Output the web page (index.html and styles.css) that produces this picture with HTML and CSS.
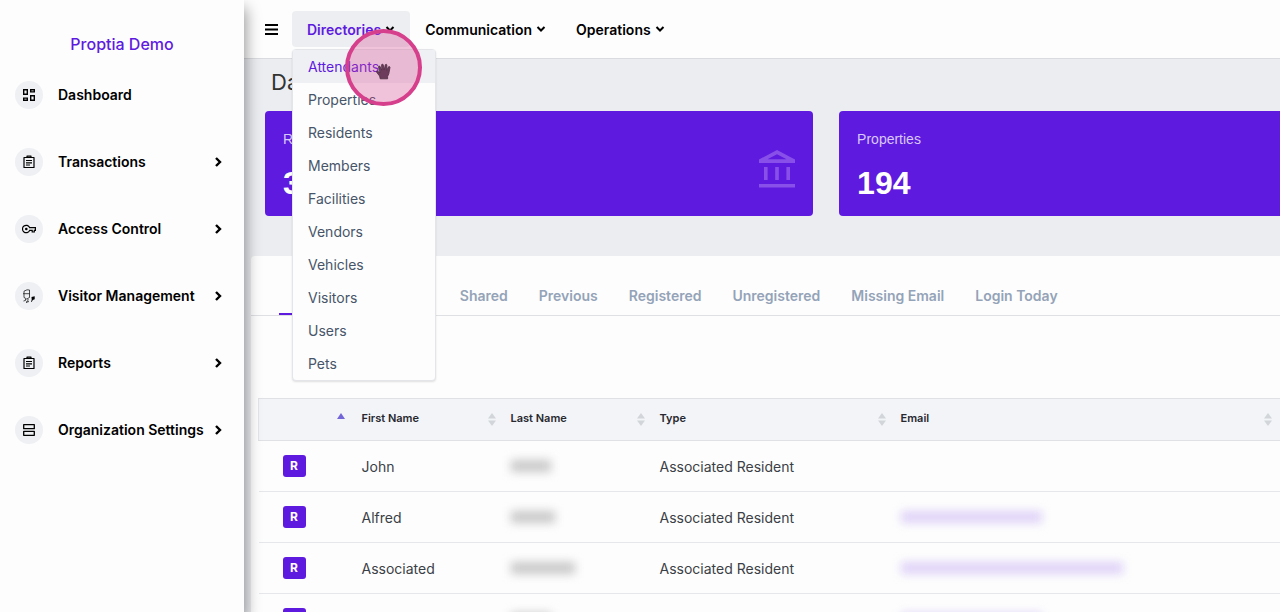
FILE: index.html
```html
<!DOCTYPE html>
<html lang="en">
<head>
    <meta charset="UTF-8">
    <meta name="viewport" content="width=device-width, initial-scale=1">
    <title>Proptia Demo</title>
    <link rel="stylesheet" href="styles.css">
</head>
<body>
<svg class="sprite" aria-hidden="true">
    <symbol id="chevron" viewBox="0 0 10 10">
        <path d="M1.5 3L5 6.5L8.5 3" fill="none" stroke="currentColor" stroke-width="2"/>
    </symbol>
    <symbol id="arrow" viewBox="0 0 10 10">
        <path d="M3 1L7 5L3 9" fill="none" stroke="currentColor" stroke-width="2.4"/>
    </symbol>
    <symbol id="clipboard" viewBox="0 0 14 14">
        <path d="M2 2.5h10v10H2zM5 2.5V1.2h4v1.3M4 5.5h6M4 7.8h6M4 10h4" fill="none" stroke="currentColor" stroke-width="1.2" stroke-linejoin="round"/>
    </symbol>
    <symbol id="sort" viewBox="0 0 8 13">
        <path d="M4 0L8 5.5H0zM4 13L0 7.5H8z" fill="currentColor"/>
    </symbol>
</svg>

<aside class="sidebar">
    <h2 class="brand">Proptia Demo</h2>
    <nav class="side-nav">
        <a href="#" class="side-link">
            <span class="side-icon"><svg viewBox="0 0 14 14"><path d="M1.7 1.7h3.6v4.6H1.7zM8.7 1.7h3.6v2.2H8.7zM1.7 10.1h3.6v2.2H1.7zM8.7 7.7h3.6v4.6H8.7z" fill="none" stroke="currentColor" stroke-width="1.4"/></svg></span>
            <span>Dashboard</span>
        </a>
        <a href="#" class="side-link">
            <span class="side-icon"><svg><use href="#clipboard"/></svg></span>
            <span>Transactions</span>
            <svg class="arrow"><use href="#arrow"/></svg>
        </a>
        <a href="#" class="side-link">
            <span class="side-icon"><svg viewBox="0 0 14 14"><path d="M7.6 5.6H13.4V8.4H12.3V10H10.2V8.4H7.6A3.7 3.7 0 1 1 7.6 5.6z" fill="none" stroke="currentColor" stroke-width="1.2"/><circle cx="4.3" cy="7" r="1.3"/></svg></span>
            <span>Access Control</span>
            <svg class="arrow"><use href="#arrow"/></svg>
        </a>
        <a href="#" class="side-link">
            <span class="side-icon"><svg viewBox="0 0 14 14"><path d="M2 4.5V2.2L5 .8L7.5 1V4.5M1 4.7H8M2 4.7V8.5Q4.7 11.5 7.5 8.5V4.7M3.5 10v1.4L1.5 12M6 10v1.6L4 13.4L7 12.5" fill="none" stroke="currentColor" stroke-width=".7"/><path d="M9.5 8l3.2-.8V10.2L10.8 11L9.7 13L9 12.6L9.7 11z"/></svg></span>
            <span>Visitor Management</span>
            <svg class="arrow"><use href="#arrow"/></svg>
        </a>
        <a href="#" class="side-link">
            <span class="side-icon"><svg><use href="#clipboard"/></svg></span>
            <span>Reports</span>
            <svg class="arrow"><use href="#arrow"/></svg>
        </a>
        <a href="#" class="side-link">
            <span class="side-icon"><svg viewBox="0 0 14 14"><path d="M1.7 1.7h10.6v4H1.7zM1.7 8.3h10.6v4H1.7z" fill="none" stroke="currentColor" stroke-width="1.3" stroke-linejoin="round"/></svg></span>
            <span>Organization Settings</span>
            <svg class="arrow"><use href="#arrow"/></svg>
        </a>
    </nav>
</aside>

<div class="main">
    <header class="topbar">
        <button class="burger" type="button" aria-label="Toggle menu"><svg viewBox="0 0 13 11"><path d="M0 1h13M0 5.5h13M0 10h13" stroke="currentColor" stroke-width="2"/></svg></button>
        <div class="dropdown">
            <button class="top-link active" type="button" aria-expanded="true">Directories<svg class="chevron"><use href="#chevron"/></svg></button>
            <ul class="menu">
                <li><a href="#" class="current">Attendants</a></li>
                <li><a href="#">Properties</a></li>
                <li><a href="#">Residents</a></li>
                <li><a href="#">Members</a></li>
                <li><a href="#">Facilities</a></li>
                <li><a href="#">Vendors</a></li>
                <li><a href="#">Vehicles</a></li>
                <li><a href="#">Visitors</a></li>
                <li><a href="#">Users</a></li>
                <li><a href="#">Pets</a></li>
            </ul>
            <div class="pointer">
                <svg viewBox="0 0 16 17"><path d="M4.2 15.8L3.6 13L.6 9.2Q.2 8 1.4 8L4 9.8L2.5 4Q2.6 2.6 3.9 3.2L5.8 7.2L5.6 1.8Q6.3.4 7.2 1.6L8.2 7L9.3 1.7Q10.2.5 10.9 1.9L10.7 7.4L12.5 3.8Q13.8 3.1 14 4.4L12.8 10.8L11.6 13.5V15.8z" fill="#6d3c5c" stroke="#4d2f43" stroke-width=".8"/></svg>
            </div>
        </div>
        <button class="top-link" type="button">Communication<svg class="chevron"><use href="#chevron"/></svg></button>
        <button class="top-link" type="button">Operations<svg class="chevron"><use href="#chevron"/></svg></button>
    </header>

    <h1 class="title">Dashboard</h1>

    <section class="cards">
        <div class="card">
            <div>
                <p class="card-label">Residents</p>
                <p class="card-value">356</p>
            </div>
            <svg class="bank" viewBox="0 0 36 38"><path fill-rule="evenodd" d="M0 9.5L18 0L36 9.5V13H0zM8.5 9.3H27.5L18 4.2zM5 17h3.6v13H5zM16.2 17h3.6v13h-3.6zM27.4 17H31v13h-3.6zM0 34h36v3.6H0z" fill="currentColor"/></svg>
        </div>
        <div class="card">
            <div>
                <p class="card-label">Properties</p>
                <p class="card-value">194</p>
            </div>
        </div>
    </section>

    <section class="panel">
        <nav class="tabs">
            <a href="#" class="selected">Active</a>
            <a href="#">Archived</a>
            <a href="#">Shared</a>
            <a href="#">Previous</a>
            <a href="#">Registered</a>
            <a href="#">Unregistered</a>
            <a href="#">Missing Email</a>
            <a href="#">Login Today</a>
        </nav>
        <table class="people">
            <colgroup>
                <col class="col-badge">
                <col class="col-name">
                <col class="col-name">
                <col class="col-type">
                <col class="col-email">
                <col>
            </colgroup>
            <thead>
            <tr>
                <th><svg class="sorted" viewBox="0 0 8 6"><path d="M4 0L8 6H0z" fill="currentColor"/></svg></th>
                <th>First Name<svg class="sort"><use href="#sort"/></svg></th>
                <th>Last Name<svg class="sort"><use href="#sort"/></svg></th>
                <th>Type<svg class="sort"><use href="#sort"/></svg></th>
                <th>Email<svg class="sort"><use href="#sort"/></svg></th>
                <th></th>
            </tr>
            </thead>
            <tbody>
            <tr>
                <td><span class="badge">R</span></td>
                <td>John</td>
                <td><span class="masked" style="width: 40px"></span></td>
                <td>Associated Resident</td>
                <td></td>
                <td></td>
            </tr>
            <tr>
                <td><span class="badge">R</span></td>
                <td>Alfred</td>
                <td><span class="masked" style="width: 44px"></span></td>
                <td>Associated Resident</td>
                <td><span class="masked mail" style="width: 141px"></span></td>
                <td></td>
            </tr>
            <tr>
                <td><span class="badge">R</span></td>
                <td>Associated</td>
                <td><span class="masked" style="width: 64px"></span></td>
                <td>Associated Resident</td>
                <td><span class="masked mail" style="width: 222px"></span></td>
                <td></td>
            </tr>
            <tr>
                <td><span class="badge">R</span></td>
                <td></td>
                <td><span class="masked" style="width: 40px"></span></td>
                <td></td>
                <td><span class="masked mail" style="width: 141px"></span></td>
                <td></td>
            </tr>
            </tbody>
        </table>
    </section>
</div>
</body>
</html>
```

FILE: styles.css
```css
*{
    margin: 0;
    padding: 0;
    box-sizing: border-box;
}
body{
    display: flex;
    height: 100vh;
    overflow: hidden;
    background-color: #ebedf1;
    font-family: Inter, "Liberation Sans", sans-serif;
    font-size: 14px;
    color: #000;
}
a{
    color: inherit;
    text-decoration: none;
}
button{
    border: none;
    background: none;
    font: inherit;
    color: inherit;
    cursor: pointer;
}
.sprite{
    position: absolute;
    width: 0;
    height: 0;
}

/* sidebar */
.sidebar{
    flex: none;
    width: 244px;
    padding-top: 34px;
    background-color: #fdfdfd;
    box-shadow: 2px 8px 14px rgba(0, 0, 0, .4);
    z-index: 1;
}
.brand{
    font-size: 16px;
    font-weight: 500;
    line-height: 20px;
    text-align: center;
    color: #5f1ae0;
}
.side-nav{
    padding: 7px 21px 0 15px;
}
.side-link{
    display: flex;
    align-items: center;
    height: 67px;
    font-weight: 600;
    white-space: nowrap;
}
.side-icon{
    display: flex;
    align-items: center;
    justify-content: center;
    flex: none;
    width: 28px;
    height: 28px;
    margin-right: 15px;
    border-radius: 50%;
    background-color: #eef0f3;
}
.side-icon svg{
    width: 14px;
    height: 14px;
}
.arrow{
    width: 10px;
    height: 10px;
    margin-left: auto;
}

/* top bar */
.main{
    flex: 1;
    display: flex;
    flex-direction: column;
    min-width: 0;
    overflow: hidden;
}
.topbar{
    display: flex;
    flex: none;
    align-items: center;
    height: 59px;
    padding-left: 21px;
    background-color: #fdfdfd;
    border-bottom: 1px solid #d9dbe0;
}
.burger{
    width: 13px;
    height: 11px;
    margin-right: 14px;
}
.burger svg{
    display: block;
}
.dropdown{
    position: relative;
}
.top-link{
    display: flex;
    align-items: center;
    height: 36px;
    padding: 0 15px;
    border-radius: 4px;
    font-weight: 600;
}
.active{
    background-color: #eceef1;
    color: #5f1ae0;
}
.chevron{
    width: 10px;
    height: 10px;
    margin-left: 4px;
}
.active .chevron{
    color: #000;
}
.menu{
    position: absolute;
    top: 38px;
    left: 0;
    width: 144px;
    border: 1px solid #e3e5e9;
    border-radius: 4px;
    background-color: #fdfdfd;
    box-shadow: 0 1px 2px rgba(0, 0, 0, .12);
    list-style: none;
}
.menu a{
    display: block;
    padding-left: 15px;
    line-height: 33px;
    color: #475569;
}
.menu .current{
    background-color: #eff0f3;
    color: #5f1ae0;
}
.pointer{
    position: absolute;
    top: 18px;
    left: 53px;
    display: flex;
    align-items: center;
    justify-content: center;
    width: 77px;
    height: 77px;
    padding-top: 8px;
    border: 4px solid #d63f8c;
    border-radius: 50%;
    background-color: rgba(214, 63, 140, .3);
}
.pointer svg{
    width: 16px;
    height: 17px;
}

/* cards */
.title{
    flex: none;
    padding: 7px 0 13px 27px;
    font-size: 22px;
    font-weight: 400;
    line-height: 32px;
    color: #333;
}
.cards{
    display: grid;
    flex: none;
    grid-template-columns: repeat(2, 54%);
    column-gap: 26px;
    padding-left: 21px;
}
.card{
    display: flex;
    justify-content: space-between;
    align-items: center;
    height: 105px;
    padding: 2px 18px 0;
    border-radius: 4px;
    background-color: #5f1ae0;
    color: #fff;
    font-family: "Liberation Sans", sans-serif;
}
.card-label{
    font-size: 14px;
    line-height: 20px;
    color: #d9c9f8;
}
.card-value{
    margin-top: 16px;
    font-size: 32px;
    font-weight: bold;
    line-height: 36px;
}
.bank{
    width: 36px;
    height: 38px;
    margin-top: 8px;
    color: #8850e8;
}

/* residents panel */
.panel{
    flex: 1;
    margin: 40px 0 0 7px;
    border-radius: 4px 0 0 0;
    background-color: #fdfdfd;
}
.tabs{
    display: flex;
    height: 60px;
    padding-left: 28px;
    border-bottom: 1px solid #dfe0e3;
    font-weight: 600;
    color: #94a3b8;
    white-space: nowrap;
}
.tabs a{
    padding: 30px 16px 0 15px;
    line-height: 20px;
}
.tabs .selected{
    border-bottom: 2px solid #5f1ae0;
}
.people{
    width: 120%;
    margin: 82px 0 0 7px;
    border-collapse: collapse;
    table-layout: fixed;
}
.people thead{
    border-left: 1px solid #e3e5e8;
}
.col-badge{
    width: 93px;
}
.col-name{
    width: 149px;
}
.col-type{
    width: 241px;
}
.col-email{
    width: 386px;
}
.people th{
    position: relative;
    height: 42px;
    padding: 0 10px 4px;
    border-top: 1px solid #dfe1e5;
    border-bottom: 1px solid #dfe1e5;
    background-color: #f2f4f7;
    font-size: 11px;
    font-weight: 600;
    text-align: left;
    color: #27272f;
}
.people td{
    height: 51px;
    padding: 0 10px;
    border-bottom: 1px solid #e6e7ea;
    color: #3b3f46;
}
.people td:first-child{
    padding-left: 24px;
}
.sort, .sorted{
    position: absolute;
    right: 5px;
    top: 14px;
    width: 8px;
    height: 13px;
    color: #d2d5da;
}
.sorted{
    right: 7px;
    height: 6px;
    color: #7466d8;
}
.badge{
    display: block;
    width: 23px;
    border-radius: 3px;
    background-color: #5f1ae0;
    font-size: 12px;
    font-weight: 700;
    line-height: 22px;
    text-align: center;
    color: #fff;
}
.masked{
    display: block;
    height: 12px;
    background-color: #c8c8c8;
    filter: blur(5px);
}
.mail{
    background-color: #dfd2f8;
}
```
